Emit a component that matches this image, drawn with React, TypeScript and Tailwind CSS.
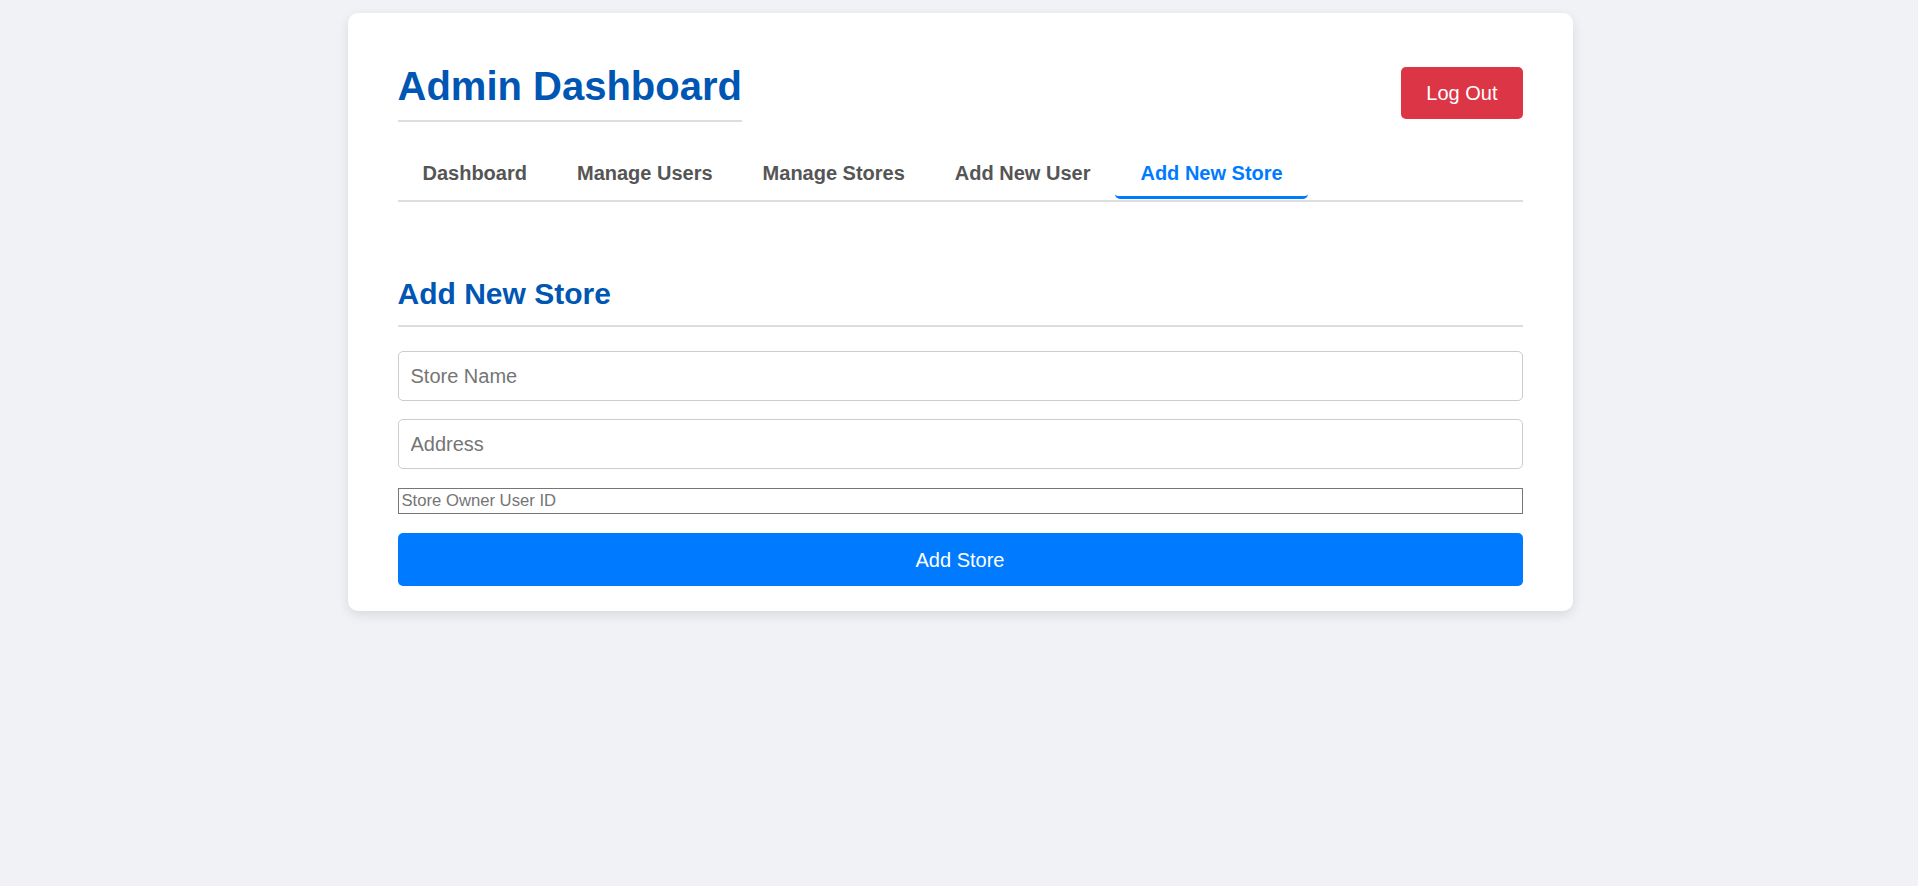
import { useState } from 'react';

const tabs = ['Dashboard', 'Manage Users', 'Manage Stores', 'Add New User', 'Add New Store'];

function App() {
  const [active, setActive] = useState('Add New Store');

  return (
    <div className="min-h-screen bg-[#f0f2f5] pt-[13px] pl-[2px] font-['Liberation_Sans',Arial,sans-serif]">
      <div className="mx-auto w-[1225px] rounded-[10px] bg-white px-[50px] pt-[50px] pb-[25px] shadow-[0_4px_12px_rgba(0,0,0,0.1)]">
        {/* Header */}
        <div className="flex items-center justify-between">
          <h1 className="border-b-2 border-[#dddddd] pb-[11px] text-[40px] leading-[46px] font-bold text-[#0056b3]">
            Admin Dashboard
          </h1>
          <button className="h-[52px] rounded-[5px] bg-[#dc3545] px-[25px] text-[20px] text-white">
            Log Out
          </button>
        </div>

        {/* Tabs */}
        <div className="mt-[29px] flex border-b-2 border-[#dddddd] pb-[1px]">
          {tabs.map((t) => (
            <button
              key={t}
              onClick={() => setActive(t)}
              className={
                t === active
                  ? 'rounded-[5px] border-b-[3px] border-[#007bff] px-[25px] py-[11px] text-[20px] leading-[23px] font-bold text-[#007bff]'
                  : 'rounded-[5px] border-b-[3px] border-transparent px-[25px] py-[11px] text-[20px] leading-[23px] font-bold text-[#555555]'
              }
            >
              {t}
            </button>
          ))}
        </div>

        {/* Add store form */}
        <h2 className="mt-[75px] border-b-2 border-[#dddddd] pb-[14px] text-[30px] leading-[34px] font-bold text-[#0056b3]">
          Add New Store
        </h2>
        <form className="mt-[24px] flex flex-col" onSubmit={(e) => e.preventDefault()}>
          <input
            placeholder="Store Name"
            className="h-[50px] rounded-[5px] border border-[#cccccc] px-[12px] text-[20px] placeholder:text-[#757575] outline-none"
          />
          <input
            placeholder="Address"
            className="mt-[18px] h-[50px] rounded-[5px] border border-[#cccccc] px-[12px] text-[20px] placeholder:text-[#757575] outline-none"
          />
          <input
            placeholder="Store Owner User ID"
            className="mt-[19px] h-[26px] border border-[#767676] px-[3px] text-[16.67px] placeholder:text-[#757575] outline-none"
          />
          <button
            type="submit"
            className="mt-[19px] h-[53px] rounded-[5px] bg-[#007bff] text-[20px] text-white"
          >
            Add Store
          </button>
        </form>
      </div>
    </div>
  );
}

export default App;
